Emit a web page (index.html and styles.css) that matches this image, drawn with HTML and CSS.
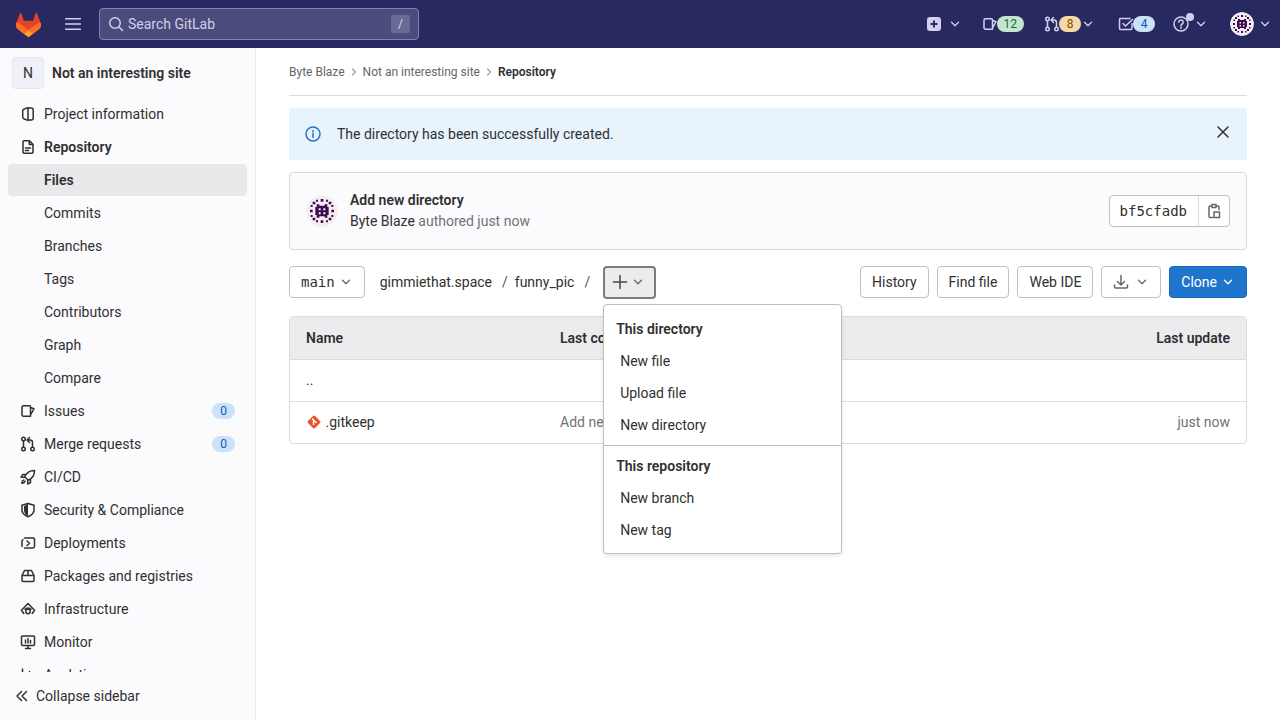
FILE: index.html
```html
<!DOCTYPE html>
<html lang="en">
<head>
    <meta charset="UTF-8">
    <title>Files · Not an interesting site · GitLab</title>
    <link rel="stylesheet" href="styles.css">
</head>
<body>
    <svg class="sprite" xmlns="http://www.w3.org/2000/svg">
        <symbol id="i-chevron" viewBox="0 0 16 16"><path d="M4 6l4 4 4-4"/></symbol>
        <symbol id="i-project" viewBox="0 0 16 16"><path d="M8 1.6L4.2 3A2.4 2.4 0 0 0 2.7 5.2v5.6A2.4 2.4 0 0 0 4.2 13L8 14.4zM8 2h3.2a2 2 0 0 1 2 2v8a2 2 0 0 1-2 2H8"/></symbol>
        <symbol id="i-doc" viewBox="0 0 16 16"><path d="M4 1.75h5.5L13 5.25v8a1 1 0 0 1-1 1H4a1 1 0 0 1-1-1v-10.500a1 1 0 0 1 1-1zM9.250 2v3.500H13M5.500 9h5M5.500 11.500h3"/></symbol>
        <symbol id="i-issue" viewBox="0 0 16 16"><path d="M3.500 2.750h6a1 1 0 0 1 1 1v9.500h-7a1.500 1.500 0 0 1-1.500-1.500v-7.500a1.500 1.500 0 0 1 1.500-1.500zM10.500 4.500l3.500 1.200-3.500 6.300"/></symbol>
        <symbol id="i-merge" viewBox="0 0 16 16"><circle cx="3.500" cy="3" r="1.750"/><circle cx="3.500" cy="13" r="1.750"/><circle cx="12.500" cy="13" r="1.750"/><path d="M3.500 5v6M12.500 11V6.500a2.500 2.500 0 0 0-2.500-2.500H7.500M9.500 1.500L7 4l2.500 2.500"/></symbol>
        <symbol id="i-rocket" viewBox="0 0 16 16"><path d="M14.500 1.500c-4.500 0-8 2-9.800 6.300l3.500 3.500c4.300-1.800 6.300-5.300 6.300-9.800zM5 5.500H2.800L1 8.300h3.200M10.500 11v2.500l-2.800 1.500v-3.200M3.800 11c-1.200.4-2 1.700-2 3.200 1.500 0 2.800-.8 3.200-2"/></symbol>
        <symbol id="i-shield" viewBox="0 0 16 16"><path d="M8 1.500l6 1.800V8c0 3.300-2.600 5.400-6 6.700C4.600 13.400 2 11.300 2 8V3.300z"/><path class="solid" d="M8 2v12c-2.500-1.100-4-3-4-6V4.300z"/></symbol>
        <symbol id="i-deploy" viewBox="0 0 16 16"><path d="M4.500 3h8.700a1.300 1.300 0 0 1 1.300 1.300v6.900a1.800 1.800 0 0 1-1.800 1.800H4.500M2 11.500V6.500a2 2 0 0 1 1-1.800M7 6l2.500 2.250L7 10.500"/></symbol>
        <symbol id="i-package" viewBox="0 0 16 16"><path d="M4.500 2.500h7L14 7.500v5a1 1 0 0 1-1 1H3a1 1 0 0 1-1-1v-5zM2 7.500h12M8 2.500v5"/></symbol>
        <symbol id="i-infra" viewBox="0 0 16 16"><circle cx="8" cy="10.500" r="2.200"/><path d="M3.800 12.500L1.500 9.200 8 2.500l6.500 6.700-2.300 3.300M5 8.300a4 4 0 0 1 6 0"/></symbol>
        <symbol id="i-monitor" viewBox="0 0 16 16"><path d="M2.500 2h11a1 1 0 0 1 1 1v7.500a1 1 0 0 1-1 1h-11a1 1 0 0 1-1-1V3a1 1 0 0 1 1-1zM5.500 14.500h5M8 11.500v3M5.500 6v3M8 4.500V9M10.500 6.500V9"/></symbol>
        <symbol id="i-chart" viewBox="0 0 16 16"><path d="M2.500 2v12M6 7v7M9.500 4.500V14M13 8.500V14"/></symbol>
        <symbol id="i-double" viewBox="0 0 16 16"><path d="M7.500 3.500L3 8l4.500 4.500M12.500 3.500L8 8l4.500 4.500"/></symbol>
        <symbol id="i-search" viewBox="0 0 16 16"><circle cx="7" cy="7" r="5.250"/><path d="M11 11l3.500 3.500"/></symbol>
        <symbol id="i-burger" viewBox="0 0 16 16"><path d="M.5 2.750h15M.5 8h15M.5 13.250h15"/></symbol>
        <symbol id="i-todo" viewBox="0 0 16 16"><path d="M14 7.500v5a1 1 0 0 1-1 1H2.500a1 1 0 0 1-1-1v-9a1 1 0 0 1 1-1H12M5 7.500l2.500 2.500L14.500 3.500"/></symbol>
        <symbol id="i-help" viewBox="0 0 16 16"><circle cx="8" cy="8" r="7"/><path d="M5.800 6.200a2.200 2.200 0 1 1 3.400 1.800C8.400 8.500 8 9 8 9.800M8 11.300v1"/></symbol>
        <symbol id="i-plus" viewBox="0 0 16 16"><path d="M8 1.500v13M1.500 8h13"/></symbol>
        <symbol id="i-download" viewBox="0 0 16 16"><path d="M8 1.500v9M4.500 7.500L8 11l3.500-3.500M1.500 11v2a1 1 0 0 0 1 1h11a1 1 0 0 0 1-1v-2"/></symbol>
        <symbol id="i-copy" viewBox="0 0 16 16"><path d="M5.500 3H4a1 1 0 0 0-1 1v9.500a1 1 0 0 0 1 1h2.500M10.500 3H12a1 1 0 0 1 1 1v2.500M6 1.500h4V4.500H6zM9 9h4.500v5.500H8V9z"/></symbol>
        <symbol id="i-info" viewBox="0 0 16 16"><circle cx="8" cy="8" r="7"/><path d="M8 7.500v4M8 4.500v1.200"/></symbol>
        <symbol id="i-close" viewBox="0 0 16 16"><path d="M3 3l10 10M13 3L3 13"/></symbol>
        <symbol id="avatar" viewBox="0 0 24 24">
            <circle cx="12" cy="12" r="12" fill="#f4eef2"/>
            <path fill="#3f0b4f" d="M8 7h2v1h4V7h2v2h1v6h-1v2h-2v-1h-4v1H8v-2H7V9h1z"/>
            <path fill="#f4eef2" d="M9.500 10h1.500v1.500H9.500zM13 10h1.500v1.500H13zM9.500 13h1.500v1.500H9.500zM13 13h1.500v1.500H13z"/>
            <path fill="#3f0b4f" d="M5 5h2v2H5zM17 5h2v2h-2zM5 17h2v2H5zM17 17h2v2h-2zM11 3h2v2h-2zM11 19h2v2h-2zM3 11h2v2H3zM19 11h2v2h-2zM7.500 3.500h1.500V5H7.500zM15 3.500h1.500V5H15zM7.500 19h1.500v1.500H7.500zM15 19h1.500v1.500H15zM3.500 7.500H5V9H3.500zM19 7.500h1.500V9H19zM3.500 15H5v1.500H3.500zM19 15h1.500v1.500H19z"/>
        </symbol>
    </svg>

    <header class="navbar">
        <svg class="logo" viewBox="0 0 25 24">
            <path fill="#E24329" d="m24.507 9.5-.034-.09L21.082.562a.896.896 0 0 0-1.694.091l-2.29 7.01H7.825L5.535.653a.898.898 0 0 0-1.694-.09L.451 9.411.416 9.5a6.297 6.297 0 0 0 2.09 7.278l.012.01.03.022 5.16 3.867 2.56 1.935 1.554 1.176a1.051 1.051 0 0 0 1.268 0l1.555-1.176 2.56-1.935 5.197-3.89.014-.01A6.297 6.297 0 0 0 24.507 9.5Z"/>
            <path fill="#FC6D26" d="m24.507 9.5-.034-.09a11.44 11.44 0 0 0-4.56 2.051l-7.447 5.632 4.742 3.584 5.197-3.89.014-.01A6.297 6.297 0 0 0 24.507 9.5Z"/>
            <path fill="#FCA326" d="m7.707 20.677 2.56 1.935 1.555 1.176a1.051 1.051 0 0 0 1.268 0l1.555-1.176 2.56-1.935-4.743-3.584-4.755 3.584Z"/>
            <path fill="#FC6D26" d="M5.010 11.461a11.430 11.430 0 0 0-4.560-2.050L.416 9.500a6.297 6.297 0 0 0 2.090 7.278l.012.010.030.022 5.160 3.867 4.745-3.584-7.444-5.632Z"/>
        </svg>
        <svg class="icon burger"><use href="#i-burger"/></svg>
        <div class="search">
            <svg class="icon"><use href="#i-search"/></svg>
            <span class="search-text">Search GitLab</span>
            <kbd class="search-key">/</kbd>
        </div>
        <nav class="nav-right">
            <div class="nav-item new-item">
                <svg class="plus-square" viewBox="0 0 16 16"><rect x="1" y="1" width="14" height="14" rx="3" fill="#d1d0f0"/><path d="M8 4.500v7M4.500 8h7" stroke="#292961" stroke-width="2"/></svg>
                <svg class="icon chevron"><use href="#i-chevron"/></svg>
            </div>
            <div class="nav-item issues-item">
                <svg class="icon"><use href="#i-issue"/></svg>
                <span class="nav-badge green">12</span>
            </div>
            <div class="nav-item mr-item">
                <svg class="icon"><use href="#i-merge"/></svg>
                <span class="nav-badge orange">8</span>
                <svg class="icon chevron"><use href="#i-chevron"/></svg>
            </div>
            <div class="nav-item todo-item">
                <svg class="icon"><use href="#i-todo"/></svg>
                <span class="nav-badge blue">4</span>
            </div>
            <div class="nav-item help-item">
                <svg class="icon"><use href="#i-help"/></svg>
                <span class="help-dot"></span>
                <svg class="icon chevron"><use href="#i-chevron"/></svg>
            </div>
            <div class="nav-item user-item">
                <svg class="user-avatar"><use href="#avatar"/></svg>
                <svg class="icon chevron"><use href="#i-chevron"/></svg>
            </div>
        </nav>
    </header>

    <div class="page">
        <aside class="sidebar">
            <div class="project-head">
                <span class="project-letter">N</span>
                <span class="project-name">Not an interesting site</span>
            </div>
            <ul class="side-list">
                <li class="side-item"><svg class="icon"><use href="#i-project"/></svg>Project information</li>
                <li class="side-item bold"><svg class="icon"><use href="#i-doc"/></svg>Repository</li>
                <li class="side-item sub active">Files</li>
                <li class="side-item sub">Commits</li>
                <li class="side-item sub">Branches</li>
                <li class="side-item sub">Tags</li>
                <li class="side-item sub">Contributors</li>
                <li class="side-item sub">Graph</li>
                <li class="side-item sub">Compare</li>
                <li class="side-item"><svg class="icon"><use href="#i-issue"/></svg>Issues<span class="count">0</span></li>
                <li class="side-item"><svg class="icon"><use href="#i-merge"/></svg>Merge requests<span class="count">0</span></li>
                <li class="side-item"><svg class="icon"><use href="#i-rocket"/></svg>CI/CD</li>
                <li class="side-item"><svg class="icon"><use href="#i-shield"/></svg>Security &amp; Compliance</li>
                <li class="side-item"><svg class="icon"><use href="#i-deploy"/></svg>Deployments</li>
                <li class="side-item"><svg class="icon"><use href="#i-package"/></svg>Packages and registries</li>
                <li class="side-item"><svg class="icon"><use href="#i-infra"/></svg>Infrastructure</li>
                <li class="side-item"><svg class="icon"><use href="#i-monitor"/></svg>Monitor</li>
                <li class="side-item"><svg class="icon"><use href="#i-chart"/></svg>Analytics</li>
            </ul>
            <div class="collapse">
                <svg class="icon"><use href="#i-double"/></svg>
                Collapse sidebar
            </div>
        </aside>

        <main class="content">
            <div class="breadcrumbs">
                <span>Byte Blaze</span>
                <svg class="icon crumb-sep"><use href="#i-chevron"/></svg>
                <span>Not an interesting site</span>
                <svg class="icon crumb-sep"><use href="#i-chevron"/></svg>
                <strong>Repository</strong>
            </div>

            <div class="alert">
                <svg class="icon alert-icon"><use href="#i-info"/></svg>
                <span class="alert-text">The directory has been successfully created.</span>
                <svg class="icon alert-close"><use href="#i-close"/></svg>
            </div>

            <div class="commit">
                <svg class="commit-avatar"><use href="#avatar"/></svg>
                <div class="commit-info">
                    <div class="commit-title">Add new directory</div>
                    <div class="commit-meta"><span class="author">Byte Blaze</span> authored just now</div>
                </div>
                <div class="sha-group">
                    <span class="sha">bf5cfadb</span>
                    <span class="sha-copy"><svg class="icon"><use href="#i-copy"/></svg></span>
                </div>
            </div>

            <div class="toolbar">
                <button class="btn branch">main<svg class="icon chevron"><use href="#i-chevron"/></svg></button>
                <div class="path">
                    <span>gimmiethat.space</span><i>/</i><span>funny_pic</span><i>/</i>
                </div>
                <div class="add-wrap">
                    <button class="btn add"><svg class="icon plus"><use href="#i-plus"/></svg><svg class="icon chevron"><use href="#i-chevron"/></svg></button>
                    <div class="menu">
                        <div class="menu-head">This directory</div>
                        <div class="menu-item">New file</div>
                        <div class="menu-item">Upload file</div>
                        <div class="menu-item">New directory</div>
                        <div class="menu-sep"></div>
                        <div class="menu-head">This repository</div>
                        <div class="menu-item">New branch</div>
                        <div class="menu-item">New tag</div>
                    </div>
                </div>
                <div class="actions">
                    <button class="btn">History</button>
                    <button class="btn">Find file</button>
                    <button class="btn">Web IDE</button>
                    <button class="btn download"><svg class="icon"><use href="#i-download"/></svg><svg class="icon chevron"><use href="#i-chevron"/></svg></button>
                    <button class="btn primary">Clone<svg class="icon chevron"><use href="#i-chevron"/></svg></button>
                </div>
            </div>

            <div class="tree">
                <table>
                    <thead>
                        <tr><th class="col-name">Name</th><th>Last commit</th><th class="col-date">Last update</th></tr>
                    </thead>
                    <tbody>
                        <tr><td colspan="3">..</td></tr>
                        <tr>
                            <td class="col-name">
                                <svg class="git-icon" viewBox="0 0 16 16"><rect x="3" y="3" width="10" height="10" rx="1.500" transform="rotate(45 8 8)" fill="#e4572e"/><path d="M6 4.500l4.500 4.500M7.500 6v5" stroke="#fff" stroke-width="1.300" fill="none"/></svg>
                                .gitkeep
                            </td>
                            <td class="muted">Add new directory</td>
                            <td class="col-date muted">just now</td>
                        </tr>
                    </tbody>
                </table>
            </div>
        </main>
    </div>
</body>
</html>
```

FILE: styles.css
```css
* {
    box-sizing: border-box;
}
html, body {
    height: 100%;
}
body {
    margin: 0;
    display: flex;
    flex-direction: column;
    overflow: hidden;
    background: #fff;
    color: #303030;
    font-family: Roboto, "Noto Sans", sans-serif;
    font-size: 14px;
}
.sprite {
    display: none;
}
.icon {
    width: 16px;
    height: 16px;
    flex: none;
    fill: none;
    stroke: currentColor;
    stroke-width: 1.5;
    stroke-linecap: round;
    stroke-linejoin: round;
}
.solid {
    fill: currentColor;
    stroke: none;
}
.chevron {
    width: 14px;
    height: 14px;
}

/* top bar */
.navbar {
    height: 48px;
    flex: none;
    display: flex;
    align-items: center;
    background: #292961;
    color: #d1d0f0;
    padding: 0 8px 0 16px;
}
.logo {
    width: 25px;
    height: 24px;
    margin-top: 1px;
}
.burger {
    margin-left: 24px;
}
.search {
    width: 320px;
    height: 32px;
    margin-left: 18px;
    padding: 0 8px;
    display: flex;
    align-items: center;
    gap: 4px;
    background: #4c4c7c;
    border: 1px solid #7f7fb3;
    border-radius: 4px;
    color: #cfcfe8;
}
.search-text {
    flex: 1;
}
.search-key {
    width: 19px;
    height: 18px;
    margin-right: 0;
    border-radius: 2px;
    background: #6a6a96;
    color: #d6d6ea;
    font: 12px Roboto, sans-serif;
    line-height: 18px;
    text-align: center;
}
.nav-right {
    margin-left: auto;
    display: flex;
    align-items: center;
}
.nav-item {
    position: relative;
    display: flex;
    align-items: center;
}
.new-item {
    gap: 6px;
}
.plus-square {
    width: 16px;
    height: 16px;
}
.issues-item {
    margin-left: 20px;
}
.mr-item {
    margin-left: 20px;
}
.todo-item {
    margin-left: 23px;
}
.help-item {
    margin-left: 18px;
    gap: 5px;
}
.user-item {
    margin-left: 22px;
    gap: 4px;
}
.nav-badge {
    height: 16px;
    min-width: 22px;
    padding: 0 7px;
    margin-left: -1px;
    border-radius: 8px;
    font-size: 12px;
    line-height: 16px;
    text-align: center;
}
.nav-badge.green {
    background: #c3e6cd;
    color: #24663b;
}
.nav-badge.orange {
    background: #f5d9a8;
    color: #8f4700;
}
.nav-badge.blue {
    background: #cbe2f9;
    color: #0b5cad;
}
.help-dot {
    position: absolute;
    left: 13px;
    top: -3px;
    width: 8px;
    height: 8px;
    border-radius: 50%;
    background: #d1d0f0;
}
.user-avatar {
    width: 24px;
    height: 24px;
}

/* sidebar */
.page {
    flex: 1;
    min-height: 0;
    display: flex;
}
.sidebar {
    width: 256px;
    flex: none;
    display: flex;
    flex-direction: column;
    background: #fbfafd;
    border-right: 1px solid #e9e9e9;
}
.project-head {
    height: 44px;
    padding: 6px 12px 0;
    display: flex;
    align-items: center;
    gap: 8px;
}
.project-letter {
    width: 32px;
    height: 32px;
    display: flex;
    align-items: center;
    justify-content: center;
    background: #f0f0f8;
    border: 1px solid #e6e6ee;
    border-radius: 4px;
    font-size: 14px;
}
.project-name {
    font-weight: 600;
}
.side-list {
    flex: 1;
    min-height: 0;
    margin: 6px 0 0;
    padding: 0;
    list-style: none;
    overflow: hidden;
}
.side-item {
    height: 32px;
    margin: 0 8px 1px;
    padding: 0 12px 0 12px;
    display: flex;
    align-items: center;
    gap: 8px;
    border-radius: 4px;
}
.side-item .icon {
    color: #303030;
}
.side-item.sub {
    padding-left: 36px;
}
.side-item.bold {
    font-weight: 600;
}
.side-item.active {
    background: #e9e9ec;
    font-weight: 600;
}
.count {
    margin-left: auto;
    min-width: 23px;
    height: 16px;
    border-radius: 8px;
    background: #cbe2f9;
    color: #0b5cad;
    font-size: 12px;
    line-height: 16px;
    text-align: center;
}
.collapse {
    height: 48px;
    flex: none;
    padding-left: 14px;
    display: flex;
    align-items: center;
    gap: 6px;
    background: #fbfafd;
}

/* main column */
.content {
    flex: 1;
    min-width: 0;
    padding: 0 33px;
}
.breadcrumbs {
    height: 48px;
    display: flex;
    align-items: center;
    gap: 3px;
    border-bottom: 1px solid #dbdbdb;
    color: #666;
    font-size: 12px;
}
.breadcrumbs strong {
    color: #303030;
    font-weight: 600;
}
.crumb-sep {
    width: 12px;
    height: 12px;
    transform: rotate(-90deg);
    color: #999;
}
.alert {
    height: 52px;
    margin-top: 12px;
    padding: 0 16px;
    display: flex;
    align-items: center;
    background: #e9f3fc;
}
.alert-icon {
    color: #1f75cb;
}
.alert-text {
    margin-left: 16px;
    flex: 1;
}
.alert-close {
    margin-top: -4px;
    color: #303030;
}
.commit {
    height: 78px;
    margin-top: 12px;
    padding: 0 16px;
    display: flex;
    align-items: center;
    background: #fbfafd;
    border: 1px solid #dbdbdb;
    border-radius: 4px;
}
.commit-avatar {
    width: 32px;
    height: 32px;
}
.commit-avatar, .user-avatar {
    border-radius: 50%;
}
.commit-info {
    margin-left: 12px;
    flex: 1;
    line-height: 21px;
}
.commit-title {
    font-weight: 600;
}
.commit-meta {
    color: #737278;
}
.author {
    color: #303030;
}
.sha-group {
    display: flex;
    height: 32px;
    border: 1px solid #bfbfbf;
    border-radius: 4px;
    background: #fff;
}
.sha {
    padding: 0 11px 0 10px;
    font-family: "DejaVu Sans Mono", monospace;
    font-size: 14px;
    line-height: 30px;
    border-right: 1px solid #dbdbdb;
}
.sha-copy {
    width: 30px;
    display: flex;
    align-items: center;
    justify-content: center;
    color: #666;
}

/* toolbar */
.toolbar {
    margin-top: 16px;
    display: flex;
    align-items: center;
    height: 32px;
}
.btn {
    height: 32px;
    padding: 0 11px;
    display: inline-flex;
    align-items: center;
    gap: 4px;
    background: #fff;
    color: #303030;
    border: 1px solid #bfbfbf;
    border-radius: 4px;
    font: 14px Roboto, sans-serif;
}
.btn .chevron {
    color: #666;
}
.branch {
    font-family: "DejaVu Sans Mono", monospace;
}
.path {
    margin-left: 15px;
    display: flex;
    align-items: center;
    font-size: 14px;
}
.path i {
    margin: 0 7px 0 10px;
    font-style: normal;
    color: #555;
}
.add-wrap {
    position: relative;
    margin-left: 6px;
}
.btn.add {
    width: 53px;
    height: 33px;
    padding: 0 7px;
    gap: 3px;
    background: #ececef;
    border: 2px solid #7c7c80;
}
.plus {
    color: #444;
}
.menu {
    position: absolute;
    left: 0;
    top: 38px;
    z-index: 5;
    width: 239px;
    height: 250px;
    padding: 8px 0;
    background: #fff;
    border: 1px solid #bfbfbf;
    border-radius: 4px;
    box-shadow: 0 2px 4px rgba(0, 0, 0, 0.1);
}
.menu-head {
    height: 32px;
    padding: 0 12px;
    display: flex;
    align-items: center;
    font-weight: 600;
}
.menu-item {
    height: 32px;
    padding: 0 16px;
    display: flex;
    align-items: center;
}
.menu-sep {
    height: 1px;
    margin: 4px 0 4px;
    background: #bfbfbf;
}
.actions {
    margin-left: auto;
    display: flex;
    gap: 8px;
}
.download {
    padding: 0 11px;
    gap: 6px;
}
.download .icon:first-child {
    color: #666;
}
.btn.primary {
    background: #1f75cb;
    border-color: #1068bf;
    color: #fff;
}
.btn.primary .chevron {
    color: #fff;
}

/* file table */
.tree {
    margin-top: 18px;
    border: 1px solid #dbdbdb;
    border-radius: 4px;
    overflow: hidden;
}
table {
    width: 100%;
    border-collapse: collapse;
    table-layout: fixed;
}
th {
    height: 42px;
    padding: 0 16px;
    background: #ececef;
    border-bottom: 1px solid #dbdbdb;
    text-align: left;
    font-weight: 600;
}
td {
    height: 42px;
    padding: 0 16px;
    border-bottom: 1px solid #dbdbdb;
}
tr:last-child td {
    border-bottom: 0;
}
.col-name {
    width: 254px;
}
th.col-date, td.col-date {
    width: 200px;
    text-align: right;
}
td.col-name {
    white-space: nowrap;
}
.git-icon {
    width: 16px;
    height: 16px;
    vertical-align: -3px;
}
.muted {
    color: #737278;
}
```
